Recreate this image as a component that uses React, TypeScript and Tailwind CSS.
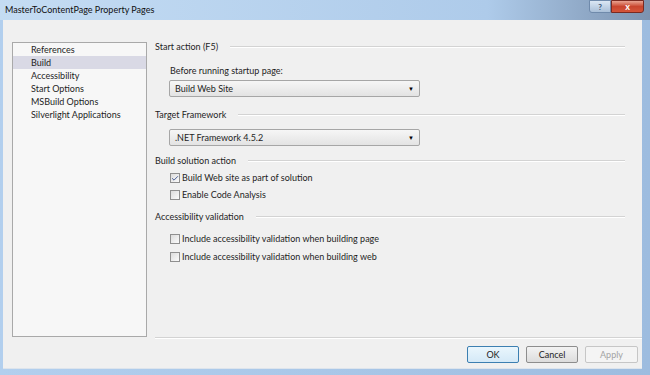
import { Check } from "lucide-react";

const pages = ["References", "Build", "Accessibility", "Start Options", "MSBuild Options", "Silverlight Applications"];

function SectionHeader({ label, className }: { label: string; className?: string }) {
    return (
        <div className={"flex items-center h-[12px] pr-[17px] " + (className ?? "")}>
            <span className="whitespace-nowrap">{label}</span>
            <div className="flex-1 ml-[12px] h-[2px] border-t border-[#d3d3d3] border-b border-b-white" />
        </div>
    );
}

function Dropdown({ value, className }: { value: string; className?: string }) {
    return (
        <div className={"ml-[14px] w-[251px] h-[17px] flex items-center justify-between px-[5px] border border-[#a6a6a6] rounded-[2px] bg-gradient-to-b from-[#f6f6f6] to-[#e3e3e3] " + (className ?? "")}>
            <span>{value}</span>
            <span className="text-[6px] leading-none text-black">▼</span>
        </div>
    );
}

function CheckRow({ label, checked, className }: { label: string; checked?: boolean; className?: string }) {
    return (
        <div className={"ml-[15px] flex items-center h-[12px] " + (className ?? "")}>
            <div className="w-[10px] h-[10px] border border-[#8f8f8f] bg-gradient-to-br from-[#dcdcdc] to-[#fbfbfb] flex items-center justify-center">
                {checked && <Check size={9} strokeWidth={3} className="text-[#4a5f97]" />}
            </div>
            <span className="ml-[2px]">{label}</span>
        </div>
    );
}

export default function App() {
    return (
        <div
            className="w-[650px] h-[375px] flex flex-col bg-gradient-to-r from-[#b2cfee] via-[#a9c7e8] to-[#9dbcdf] text-[9px] text-[#1e1e1e] overflow-hidden"
            style={{ fontFamily: 'Lato, "Noto Sans", sans-serif' }}
        >
            {/* title bar */}
            <div className="h-[20px] flex items-start justify-between bg-gradient-to-r from-[#c4dcf3] via-[#aecbea] via-75% to-[#7c93b0]">
                <span className="ml-[5px] mt-[4px] leading-[12px] text-[#111]">MasterToContentPage Property Pages</span>
                <div className="flex mr-[6px]">
                    <div className="w-[22px] h-[13px] border border-[#6f8aab] rounded-bl-[3px] bg-gradient-to-b from-[#dbe7f4] to-[#a9bfd8] flex items-center justify-center text-[8px] font-bold text-[#3d5677] leading-none">?</div>
                    <div className="w-[33px] h-[13px] border border-[#7a2a21] rounded-br-[3px] bg-gradient-to-b from-[#e8a291] via-[#c9452e] to-[#d4553a] flex items-center justify-center text-[9px] font-bold text-white leading-none">x</div>
                </div>
            </div>

            {/* client area */}
            <div className="flex-1 ml-[3px] mr-[8px] mb-[6px] bg-[#f0f0f0] flex flex-col border-b border-[#dde4ec]">
                <div className="flex pt-[22px] pl-[9px]">
                    <div className="w-[135px] h-[295px] border border-[#a9a9a9] bg-[#f7f7f7]">
                        {pages.map((p) => (
                            <div
                                key={p}
                                className={"h-[13px] leading-[13px] pl-[18px] " + (p === "Build" ? "bg-[#d9d9e5]" : "")}
                            >
                                {p}
                            </div>
                        ))}
                    </div>

                    <div className="flex-1 flex flex-col pl-[8px] -mt-[1px]">
                        <SectionHeader label="Start action (F5)" />
                        <div className="ml-[15px] mt-[12px] h-[12px] leading-[12px]">Before running startup page:</div>
                        <Dropdown value="Build Web Site" className="mt-[3px]" />
                        <SectionHeader label="Target Framework" className="mt-[12px]" />
                        <Dropdown value=".NET Framework 4.5.2" className="mt-[8px]" />
                        <SectionHeader label="Build solution action" className="mt-[9px]" />
                        <CheckRow label="Build Web site as part of solution" checked className="mt-[5px]" />
                        <CheckRow label="Enable Code Analysis" className="mt-[5px]" />
                        <SectionHeader label="Accessibility validation" className="mt-[10px]" />
                        <CheckRow label="Include accessibility validation when building page" className="mt-[10px]" />
                        <CheckRow label="Include accessibility validation when building web" className="mt-[6px]" />
                    </div>
                </div>

                <div className="ml-[152px] h-[2px] border-t border-[#d3d3d3] border-b border-b-white" />

                <div className="flex justify-end gap-[7px] pr-[4px] mt-[7px]">
                    <button className="w-[52px] h-[17px] border border-[#3c7fb1] rounded-[2px] bg-gradient-to-b from-[#eaf6fd] to-[#d4e9f7] leading-none">OK</button>
                    <button className="w-[52px] h-[17px] border border-[#8d8d8d] rounded-[2px] bg-gradient-to-b from-[#f3f3f3] to-[#dcdcdc] leading-none">Cancel</button>
                    <button className="w-[53px] h-[17px] border border-[#c6c6c6] rounded-[2px] bg-[#f4f4f4] text-[#a3a3a3] leading-none">Apply</button>
                </div>
            </div>
        </div>
    );
}
